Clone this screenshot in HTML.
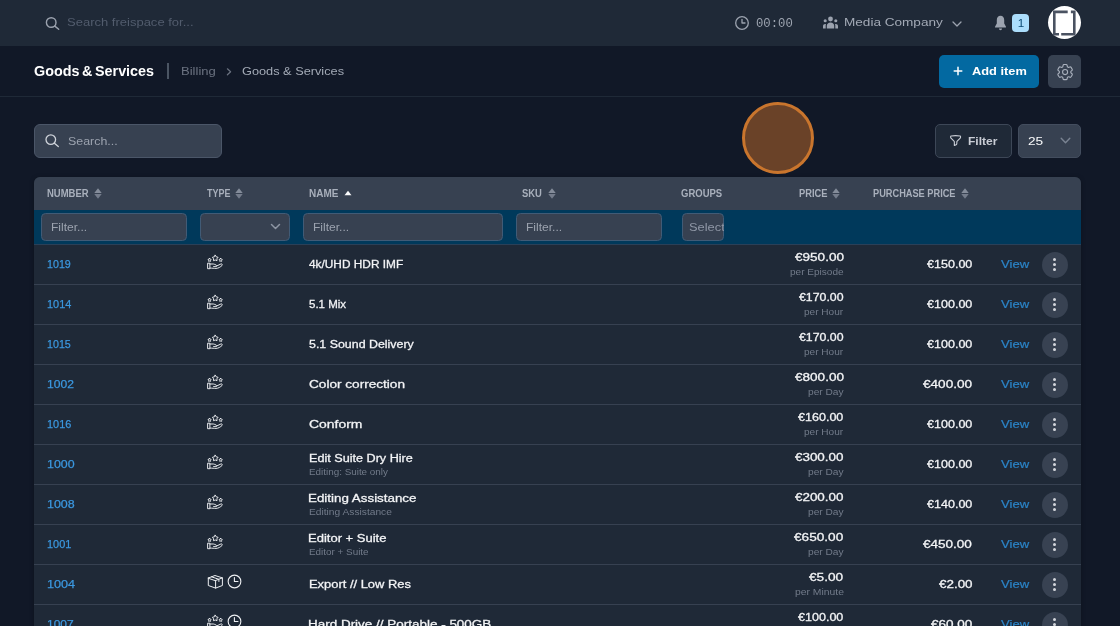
<!DOCTYPE html>
<html lang="en"><head><meta charset="utf-8"><title>Goods &amp; Services</title>
<style>
*{box-sizing:border-box;margin:0;padding:0}
html,body{width:1120px;height:626px;overflow:hidden;background:#111827;font-family:"Liberation Sans",sans-serif;color:#f9fafb}
.a,.t{position:absolute}
.t{white-space:nowrap;line-height:1;transform-origin:0 0}
.rb{left:34.400px;width:1046.600px;height:1px;background:#374151}
.fin{top:213px;height:28px;background:#374151;border:1px solid #415b76;border-radius:4.500px}
.kb{left:1041.800px;width:26.300px;height:26.300px;border-radius:50%;background:#384252}
.kb i{position:absolute;left:11.650px;width:3px;height:3px;border-radius:50%;background:#d3d6dc}
.kb i:nth-child(1){top:6.850px}.kb i:nth-child(2){top:11.650px}.kb i:nth-child(3){top:16.450px}
</style></head><body>
<!-- top bar -->
<div class="a" style="left:0;top:0;width:1120px;height:45.500px;background:#1f2937"></div>
<svg class="a" style="left:44px;top:15px" width="17" height="17" viewBox="0 0 17 17" fill="none" stroke="#9ca3af" stroke-width="1.400" stroke-linecap="round"><circle cx="7.200" cy="7.500" r="4.800"/><path d="M10.800 11.100L14.700 14.300"/></svg>
<svg class="a" style="left:733.750px;top:15px" width="16" height="16" viewBox="0 0 16 16" fill="none" stroke="#9ca3af" stroke-width="1.300" stroke-linecap="round" stroke-linejoin="round"><circle cx="8" cy="8" r="6.300"/><path d="M8 4.300V8h3"/></svg>
<svg class="a" style="left:822px;top:15.100px" width="17" height="16" viewBox="0 0 17 16" fill="#9ca3af"><circle cx="8.500" cy="4" r="2.400"/><path d="M4.800 13.500v-2.700c0-2 1.600-3.300 3.700-3.300s3.700 1.300 3.700 3.300v2.700z"/><circle cx="3.200" cy="5.800" r="1.550"/><circle cx="13.800" cy="5.800" r="1.550"/><path d="M1 13.500v-2.300c0-1.400.9-2.300 2.300-2.300.3 0 .5 0 .7.100-.2.500-.3 1-.3 1.600v2.900z"/><path d="M16 13.500v-2.300c0-1.400-.9-2.300-2.300-2.300-.3 0-.5 0-.7.100.2.500.3 1 .3 1.600v2.900z"/></svg>
<svg class="a" style="left:951.500px;top:20.500px" width="10" height="7" viewBox="0 0 10 7" fill="none" stroke="#9ca3af" stroke-width="1.300" stroke-linecap="round" stroke-linejoin="round"><path d="M1 1L5 5l4-4"/></svg>
<svg class="a" style="left:994px;top:15px" width="13" height="17" viewBox="0 0 13 17" fill="#9ca3af"><path d="M6.500 0.800C4.200 0.800 2.800 2.600 2.800 5v3.500L1 11.800c-.2.400 0 .8.500.8h10c.5 0 .7-.4.500-.8L10.200 8.500V5c0-2.400-1.400-4.200-3.700-4.200z"/><path d="M5 13.600h3c0 .900-.7 1.600-1.500 1.600S5 14.500 5 13.600z"/></svg>
<div class="a" style="left:1011.800px;top:14px;width:17.300px;height:18px;background:#abddfb;border-radius:4px"></div>
<div class="a" style="left:1048px;top:5.800px;width:33.400px;height:33.400px;border-radius:50%;background:#fff"></div>
<svg class="a" style="left:1048px;top:5.800px" width="34" height="34" viewBox="0 0 34 34" fill="none" stroke="#4a5261" stroke-width="2.600"><path d="M19.700 5.900H6.300V28.200H11"/><path d="M22.900 5.900H26.300V28.200H13.200"/></svg>
<!-- header -->
<div class="a" style="left:0;top:96px;width:1120px;height:1px;background:#1f2937"></div>
<div class="a" style="left:167.200px;top:63.400px;width:2px;height:16px;background:#4b5563"></div>
<svg class="a" style="left:225px;top:67px" width="8" height="10" viewBox="0 0 8 10" fill="none" stroke="#6b7280" stroke-width="1.200" stroke-linecap="round" stroke-linejoin="round"><path d="M2.400 1.800l3.200 3-3.200 3"/></svg>
<div class="a" style="left:938.600px;top:55.200px;width:100.300px;height:32.900px;background:#0369a1;border-radius:5px"></div>
<svg class="a" style="left:952.750px;top:66.250px" width="10" height="10" viewBox="0 0 10 10" stroke="#fff" stroke-width="1.500" stroke-linecap="round"><path d="M5 1.200v7.600M1.200 5h7.600"/></svg>
<div class="a" style="left:1048.200px;top:55.200px;width:32.800px;height:32.900px;background:#374151;border-radius:5px"></div>
<svg class="a" style="left:1054.500px;top:61.900px" width="20.200" height="20.200" viewBox="0 0 24 24" fill="none" stroke="#aab1bd" stroke-width="1.300" stroke-linecap="round" stroke-linejoin="round"><path d="M9.594 3.940c.09-.542.560-.940 1.110-.940h2.593c.55 0 1.020.398 1.110.940l.213 1.281c.063.374.313.686.645.870.074.040.147.083.220.127.324.196.720.257 1.075.124l1.217-.456a1.125 1.125 0 011.370.490l1.296 2.247a1.125 1.125 0 01-.260 1.431l-1.003.827c-.293.240-.438.613-.431.992a6.759 6.759 0 010 .255c-.007.378.138.750.430.990l1.005.828c.424.350.534.954.260 1.430l-1.298 2.247a1.125 1.125 0 01-1.369.491l-1.217-.456c-.355-.133-.750-.072-1.076.124a6.570 6.570 0 01-.220.128c-.331.183-.581.495-.644.869l-.213 1.280c-.090.543-.560.941-1.110.941h-2.594c-.550 0-1.020-.398-1.110-.940l-.213-1.281c-.062-.374-.312-.686-.644-.870a6.520 6.520 0 01-.220-.127c-.325-.196-.720-.257-1.076-.124l-1.217.456a1.125 1.125 0 01-1.369-.490l-1.297-2.247a1.125 1.125 0 01.260-1.431l1.004-.827c.292-.240.437-.613.430-.992a6.932 6.932 0 010-.255c.007-.378-.138-.750-.430-.990l-1.004-.828a1.125 1.125 0 01-.260-1.430l1.297-2.247a1.125 1.125 0 011.370-.491l1.216.456c.356.133.751.072 1.076-.124.072-.044.146-.087.220-.128.332-.183.582-.495.644-.869l.214-1.281z"/><circle cx="12" cy="12" r="3"/></svg>
<!-- tools -->
<div class="a" style="left:34.400px;top:123.800px;width:187.700px;height:34.200px;background:#374151;border:1px solid #4b5668;border-radius:6px"></div>
<svg class="a" style="left:44.100px;top:133.100px" width="17" height="17" viewBox="0 0 17 17" fill="none" stroke="#cfd3da" stroke-width="1.300" stroke-linecap="round"><circle cx="6.800" cy="6.600" r="4.800"/><path d="M10.400 10.200L14.300 13.600"/></svg>
<div class="a" style="left:742px;top:102px;width:72px;height:72px;border-radius:50%;background:#6a4228;border:3.200px solid #c9752d"></div>
<div class="a" style="left:935.400px;top:123.800px;width:76.700px;height:34.200px;border:1px solid #3d4757;border-radius:5px;background:#1f2937"></div>
<svg class="a" style="left:949.100px;top:134.300px" width="13.200" height="13.200" viewBox="0 0 24 24" fill="none" stroke="#c9cdd5" stroke-width="2" stroke-linejoin="round" stroke-linecap="round"><path d="M12 3c2.755 0 5.455.232 8.083.678.533.09.917.556.917 1.096v1.044a2.250 2.250 0 01-.659 1.591l-5.432 5.432a2.250 2.250 0 00-.659 1.591v2.927a2.250 2.250 0 01-1.244 2.013L9.750 21v-6.568a2.250 2.250 0 00-.659-1.591L3.659 7.409A2.250 2.250 0 013 5.818V4.774c0-.540.384-1.006.917-1.096A48.320 48.320 0 0112 3z"/></svg>
<div class="a" style="left:1018.400px;top:123.800px;width:62.700px;height:34.200px;border:1px solid #434d5e;border-radius:5px;background:#374151"></div>
<svg class="a" style="left:1060.400px;top:137px" width="11" height="8" viewBox="0 0 11 8" fill="none" stroke="#7a8392" stroke-width="1.400" stroke-linecap="round" stroke-linejoin="round"><path d="M1.200 1.200L5.500 5.800l4.300-4.600"/></svg>
<!-- table -->
<div class="a" style="left:34.400px;top:177px;width:1046.600px;height:460px;border-radius:6px 6px 0 0;background:#1f2937;overflow:hidden;box-shadow:0 1px 5px rgba(0,0,0,.28)">
 <div class="a" style="left:0;top:0;width:1047px;height:33px;background:#374151"></div>
 <div class="a" style="left:0;top:33px;width:1047px;height:35px;background:#00395b"></div>
 <div class="a" style="left:0;top:67px;width:1047px;height:1px;background:#2a4058"></div>
</div>
<svg class="a" style="left:94.0px;top:188.300px" width="8" height="11" viewBox="0 0 8 11"><path d="M4 0.300L7.700 5H0.300z" fill="#848c9a"/><path d="M4 10.700L7.700 6H0.300z" fill="#747c8b"/></svg><svg class="a" style="left:235.4px;top:188.300px" width="8" height="11" viewBox="0 0 8 11"><path d="M4 0.300L7.700 5H0.300z" fill="#848c9a"/><path d="M4 10.700L7.700 6H0.300z" fill="#747c8b"/></svg><svg class="a" style="left:344px;top:188.300px" width="8" height="11" viewBox="0 0 8 11"><path d="M4 2.700L7.500 7.200H0.500z" fill="#f9fafb"/></svg><svg class="a" style="left:547.6px;top:188.300px" width="8" height="11" viewBox="0 0 8 11"><path d="M4 0.300L7.700 5H0.300z" fill="#848c9a"/><path d="M4 10.700L7.700 6H0.300z" fill="#747c8b"/></svg><svg class="a" style="left:832.4px;top:188.300px" width="8" height="11" viewBox="0 0 8 11"><path d="M4 0.300L7.700 5H0.300z" fill="#848c9a"/><path d="M4 10.700L7.700 6H0.300z" fill="#747c8b"/></svg><svg class="a" style="left:960.8px;top:188.300px" width="8" height="11" viewBox="0 0 8 11"><path d="M4 0.300L7.700 5H0.300z" fill="#848c9a"/><path d="M4 10.700L7.700 6H0.300z" fill="#747c8b"/></svg>
<div class="a fin" style="left:41px;width:146px;"></div><div class="a fin" style="left:200px;width:90px;"></div><div class="a fin" style="left:303px;width:200px;"></div><div class="a fin" style="left:516px;width:146px;"></div><div class="a fin" style="left:681.5px;width:42.5px;"></div>
<svg class="a" style="left:269.500px;top:223px" width="11" height="8" viewBox="0 0 11 8" fill="none" stroke="#8d95a3" stroke-width="1.500" stroke-linecap="round" stroke-linejoin="round"><path d="M1.500 1.500l4 4 4-4"/></svg>
<div class="a" style="left:681.500px;top:213px;width:41.500px;height:28px;overflow:hidden;will-change:transform"><span class="t" style="left:6.900px;top:8px;font-size:11.700px;color:#8f97a6;transform:scaleX(1.1)">Select</span></div>
<div class="a rb" style="top:284px"></div><svg class="a" style="left:206.7px;top:254.3px" width="16" height="16" viewBox="0 0 16 16" fill="none" stroke="#eef0f3" stroke-width="0.950" stroke-linejoin="round" stroke-linecap="round"><path d="M8.25 1.25L9.28 2.83L11.10 3.32L9.91 4.79L10.01 6.68L8.25 6.00L6.49 6.68L6.59 4.79L5.40 3.32L7.22 2.83z"/><path d="M2.60 4.35L3.22 5.15L4.17 5.49L3.60 6.32L3.57 7.33L2.60 7.05L1.63 7.33L1.60 6.32L1.03 5.49L1.98 5.15z"/><path d="M13.70 4.35L14.32 5.15L15.27 5.49L14.70 6.32L14.67 7.33L13.70 7.05L12.73 7.33L12.70 6.32L12.13 5.49L13.08 5.15z"/><path d="M1 9.200h1.900v5.500h-1.900z"/><path d="M2.900 10h3.300c.500 0 1 .100 1.500.400l1.600.800c.800.400.500 1.400-.400 1.400h-2.300"/><path d="M9.800 11.900l4.100-1.900c1-.500 1.900.700 1.100 1.500-1.400 1.400-3.700 2.900-6 2.900-1.900 0-3.800-.300-6.100-.300"/></svg><div class="a kb" style="top:251.5px"><i></i><i></i><i></i></div>
<div class="a rb" style="top:324px"></div><svg class="a" style="left:206.7px;top:294.3px" width="16" height="16" viewBox="0 0 16 16" fill="none" stroke="#eef0f3" stroke-width="0.950" stroke-linejoin="round" stroke-linecap="round"><path d="M8.25 1.25L9.28 2.83L11.10 3.32L9.91 4.79L10.01 6.68L8.25 6.00L6.49 6.68L6.59 4.79L5.40 3.32L7.22 2.83z"/><path d="M2.60 4.35L3.22 5.15L4.17 5.49L3.60 6.32L3.57 7.33L2.60 7.05L1.63 7.33L1.60 6.32L1.03 5.49L1.98 5.15z"/><path d="M13.70 4.35L14.32 5.15L15.27 5.49L14.70 6.32L14.67 7.33L13.70 7.05L12.73 7.33L12.70 6.32L12.13 5.49L13.08 5.15z"/><path d="M1 9.200h1.900v5.500h-1.900z"/><path d="M2.900 10h3.300c.500 0 1 .100 1.500.400l1.600.800c.800.400.500 1.400-.400 1.400h-2.300"/><path d="M9.800 11.900l4.100-1.900c1-.500 1.900.700 1.100 1.500-1.400 1.400-3.700 2.900-6 2.900-1.900 0-3.800-.300-6.100-.300"/></svg><div class="a kb" style="top:291.5px"><i></i><i></i><i></i></div>
<div class="a rb" style="top:364px"></div><svg class="a" style="left:206.7px;top:334.3px" width="16" height="16" viewBox="0 0 16 16" fill="none" stroke="#eef0f3" stroke-width="0.950" stroke-linejoin="round" stroke-linecap="round"><path d="M8.25 1.25L9.28 2.83L11.10 3.32L9.91 4.79L10.01 6.68L8.25 6.00L6.49 6.68L6.59 4.79L5.40 3.32L7.22 2.83z"/><path d="M2.60 4.35L3.22 5.15L4.17 5.49L3.60 6.32L3.57 7.33L2.60 7.05L1.63 7.33L1.60 6.32L1.03 5.49L1.98 5.15z"/><path d="M13.70 4.35L14.32 5.15L15.27 5.49L14.70 6.32L14.67 7.33L13.70 7.05L12.73 7.33L12.70 6.32L12.13 5.49L13.08 5.15z"/><path d="M1 9.200h1.900v5.500h-1.900z"/><path d="M2.900 10h3.300c.500 0 1 .100 1.500.400l1.600.800c.800.400.500 1.400-.400 1.400h-2.300"/><path d="M9.800 11.900l4.100-1.900c1-.500 1.900.700 1.100 1.500-1.400 1.400-3.700 2.900-6 2.900-1.900 0-3.800-.300-6.100-.300"/></svg><div class="a kb" style="top:331.5px"><i></i><i></i><i></i></div>
<div class="a rb" style="top:404px"></div><svg class="a" style="left:206.7px;top:374.3px" width="16" height="16" viewBox="0 0 16 16" fill="none" stroke="#eef0f3" stroke-width="0.950" stroke-linejoin="round" stroke-linecap="round"><path d="M8.25 1.25L9.28 2.83L11.10 3.32L9.91 4.79L10.01 6.68L8.25 6.00L6.49 6.68L6.59 4.79L5.40 3.32L7.22 2.83z"/><path d="M2.60 4.35L3.22 5.15L4.17 5.49L3.60 6.32L3.57 7.33L2.60 7.05L1.63 7.33L1.60 6.32L1.03 5.49L1.98 5.15z"/><path d="M13.70 4.35L14.32 5.15L15.27 5.49L14.70 6.32L14.67 7.33L13.70 7.05L12.73 7.33L12.70 6.32L12.13 5.49L13.08 5.15z"/><path d="M1 9.200h1.900v5.500h-1.900z"/><path d="M2.900 10h3.300c.500 0 1 .100 1.500.400l1.600.800c.800.400.500 1.400-.400 1.400h-2.300"/><path d="M9.800 11.900l4.100-1.900c1-.500 1.900.700 1.100 1.500-1.400 1.400-3.700 2.900-6 2.900-1.900 0-3.800-.300-6.100-.300"/></svg><div class="a kb" style="top:371.5px"><i></i><i></i><i></i></div>
<div class="a rb" style="top:444px"></div><svg class="a" style="left:206.7px;top:414.3px" width="16" height="16" viewBox="0 0 16 16" fill="none" stroke="#eef0f3" stroke-width="0.950" stroke-linejoin="round" stroke-linecap="round"><path d="M8.25 1.25L9.28 2.83L11.10 3.32L9.91 4.79L10.01 6.68L8.25 6.00L6.49 6.68L6.59 4.79L5.40 3.32L7.22 2.83z"/><path d="M2.60 4.35L3.22 5.15L4.17 5.49L3.60 6.32L3.57 7.33L2.60 7.05L1.63 7.33L1.60 6.32L1.03 5.49L1.98 5.15z"/><path d="M13.70 4.35L14.32 5.15L15.27 5.49L14.70 6.32L14.67 7.33L13.70 7.05L12.73 7.33L12.70 6.32L12.13 5.49L13.08 5.15z"/><path d="M1 9.200h1.900v5.500h-1.900z"/><path d="M2.900 10h3.300c.500 0 1 .100 1.500.400l1.600.800c.800.400.500 1.400-.400 1.400h-2.300"/><path d="M9.800 11.900l4.100-1.900c1-.500 1.900.700 1.100 1.500-1.400 1.400-3.700 2.900-6 2.900-1.900 0-3.800-.300-6.100-.300"/></svg><div class="a kb" style="top:411.5px"><i></i><i></i><i></i></div>
<div class="a rb" style="top:484px"></div><svg class="a" style="left:206.7px;top:454.3px" width="16" height="16" viewBox="0 0 16 16" fill="none" stroke="#eef0f3" stroke-width="0.950" stroke-linejoin="round" stroke-linecap="round"><path d="M8.25 1.25L9.28 2.83L11.10 3.32L9.91 4.79L10.01 6.68L8.25 6.00L6.49 6.68L6.59 4.79L5.40 3.32L7.22 2.83z"/><path d="M2.60 4.35L3.22 5.15L4.17 5.49L3.60 6.32L3.57 7.33L2.60 7.05L1.63 7.33L1.60 6.32L1.03 5.49L1.98 5.15z"/><path d="M13.70 4.35L14.32 5.15L15.27 5.49L14.70 6.32L14.67 7.33L13.70 7.05L12.73 7.33L12.70 6.32L12.13 5.49L13.08 5.15z"/><path d="M1 9.200h1.900v5.500h-1.900z"/><path d="M2.900 10h3.300c.500 0 1 .100 1.500.400l1.600.800c.800.400.500 1.400-.400 1.400h-2.300"/><path d="M9.800 11.900l4.100-1.900c1-.500 1.900.700 1.100 1.500-1.400 1.400-3.700 2.900-6 2.900-1.900 0-3.800-.300-6.100-.300"/></svg><div class="a kb" style="top:451.5px"><i></i><i></i><i></i></div>
<div class="a rb" style="top:524px"></div><svg class="a" style="left:206.7px;top:494.3px" width="16" height="16" viewBox="0 0 16 16" fill="none" stroke="#eef0f3" stroke-width="0.950" stroke-linejoin="round" stroke-linecap="round"><path d="M8.25 1.25L9.28 2.83L11.10 3.32L9.91 4.79L10.01 6.68L8.25 6.00L6.49 6.68L6.59 4.79L5.40 3.32L7.22 2.83z"/><path d="M2.60 4.35L3.22 5.15L4.17 5.49L3.60 6.32L3.57 7.33L2.60 7.05L1.63 7.33L1.60 6.32L1.03 5.49L1.98 5.15z"/><path d="M13.70 4.35L14.32 5.15L15.27 5.49L14.70 6.32L14.67 7.33L13.70 7.05L12.73 7.33L12.70 6.32L12.13 5.49L13.08 5.15z"/><path d="M1 9.200h1.900v5.500h-1.900z"/><path d="M2.900 10h3.300c.500 0 1 .100 1.500.400l1.600.800c.800.400.500 1.400-.400 1.400h-2.300"/><path d="M9.800 11.900l4.100-1.900c1-.500 1.900.700 1.100 1.500-1.400 1.400-3.700 2.900-6 2.900-1.900 0-3.800-.300-6.100-.300"/></svg><div class="a kb" style="top:491.5px"><i></i><i></i><i></i></div>
<div class="a rb" style="top:564px"></div><svg class="a" style="left:206.7px;top:534.3px" width="16" height="16" viewBox="0 0 16 16" fill="none" stroke="#eef0f3" stroke-width="0.950" stroke-linejoin="round" stroke-linecap="round"><path d="M8.25 1.25L9.28 2.83L11.10 3.32L9.91 4.79L10.01 6.68L8.25 6.00L6.49 6.68L6.59 4.79L5.40 3.32L7.22 2.83z"/><path d="M2.60 4.35L3.22 5.15L4.17 5.49L3.60 6.32L3.57 7.33L2.60 7.05L1.63 7.33L1.60 6.32L1.03 5.49L1.98 5.15z"/><path d="M13.70 4.35L14.32 5.15L15.27 5.49L14.70 6.32L14.67 7.33L13.70 7.05L12.73 7.33L12.70 6.32L12.13 5.49L13.08 5.15z"/><path d="M1 9.200h1.900v5.500h-1.900z"/><path d="M2.900 10h3.300c.500 0 1 .100 1.500.400l1.600.800c.800.400.500 1.400-.400 1.400h-2.300"/><path d="M9.800 11.900l4.100-1.900c1-.500 1.900.700 1.100 1.500-1.400 1.400-3.700 2.900-6 2.900-1.900 0-3.800-.300-6.100-.300"/></svg><div class="a kb" style="top:531.5px"><i></i><i></i><i></i></div>
<div class="a rb" style="top:604px"></div><svg class="a" style="left:207px;top:574px" width="17" height="16" viewBox="0 0 17 16" fill="none" stroke="#eef0f3" stroke-width="1" stroke-linejoin="round" stroke-linecap="round"><path d="M1.300 4L8 1.500l7.400 2.400L8.600 6.500z"/><path d="M1.300 4v7.500l7.300 2.600 6.800-2.600V3.900"/><path d="M8.600 6.500v7.600"/><path d="M4.500 2.800l7.400 2.500v2.200"/></svg><svg class="a" style="left:227px;top:574.1px" width="15" height="15" viewBox="0 0 15 15" fill="none" stroke="#eef0f3" stroke-width="1.100" stroke-linejoin="round" stroke-linecap="round"><circle cx="7.500" cy="7.500" r="6.350"/><path d="M7.400 3.600v3.900h3.600"/></svg><div class="a kb" style="top:571.5px"><i></i><i></i><i></i></div>
<div class="a rb" style="top:644px"></div><svg class="a" style="left:206.7px;top:614.3px" width="16" height="16" viewBox="0 0 16 16" fill="none" stroke="#eef0f3" stroke-width="0.950" stroke-linejoin="round" stroke-linecap="round"><path d="M8.25 1.25L9.28 2.83L11.10 3.32L9.91 4.79L10.01 6.68L8.25 6.00L6.49 6.68L6.59 4.79L5.40 3.32L7.22 2.83z"/><path d="M2.60 4.35L3.22 5.15L4.17 5.49L3.60 6.32L3.57 7.33L2.60 7.05L1.63 7.33L1.60 6.32L1.03 5.49L1.98 5.15z"/><path d="M13.70 4.35L14.32 5.15L15.27 5.49L14.70 6.32L14.67 7.33L13.70 7.05L12.73 7.33L12.70 6.32L12.13 5.49L13.08 5.15z"/><path d="M1 9.200h1.900v5.500h-1.900z"/><path d="M2.900 10h3.300c.500 0 1 .100 1.500.400l1.600.800c.800.400.500 1.400-.400 1.400h-2.300"/><path d="M9.800 11.900l4.100-1.900c1-.500 1.900.700 1.100 1.500-1.400 1.400-3.700 2.900-6 2.900-1.900 0-3.800-.300-6.100-.300"/></svg><svg class="a" style="left:227px;top:614.1px" width="15" height="15" viewBox="0 0 15 15" fill="none" stroke="#eef0f3" stroke-width="1.100" stroke-linejoin="round" stroke-linecap="round"><circle cx="7.500" cy="7.500" r="6.350"/><path d="M7.400 3.600v3.900h3.600"/></svg><div class="a kb" style="top:611.5px"><i></i><i></i><i></i></div>
<div class="a" style="left:0;top:0;width:1120px;height:626px;will-change:transform">
<span class="t" style="left:66.64px;top:16px;font-size:11.7px;color:#525c6d;transform:scaleX(1.1130);">Search freispace for...</span>
<span class="t" style="left:756.49px;top:17px;font-size:13px;color:#9ca3af;font-family:'Liberation Mono',monospace;transform:scaleX(0.9440);">00:00</span>
<span class="t" style="left:844.34px;top:16px;font-size:11.7px;color:#a3aab6;transform:scaleX(1.1607);">Media Company</span>
<span class="t" style="left:1017.83px;top:17px;font-size:11.7px;color:#0b4a73;">1</span>
<span class="t" style="left:34.21px;top:63px;font-size:15.2px;color:#ffffff;font-weight:700;word-spacing:-1.5px;transform:scaleX(0.9455);">Goods &amp; Services</span>
<span class="t" style="left:181.18px;top:65px;font-size:11.7px;color:#6b7280;transform:scaleX(1.1153);">Billing</span>
<span class="t" style="left:241.52px;top:65px;font-size:11.7px;color:#a3aab6;transform:scaleX(1.0908);">Goods &amp; Services</span>
<span class="t" style="left:971.53px;top:65px;font-size:11.7px;color:#ffffff;font-weight:700;transform:scaleX(1.0959);">Add item</span>
<span class="t" style="left:67.67px;top:135px;font-size:11.7px;color:#9ca3af;transform:scaleX(1.0608);">Search...</span>
<span class="t" style="left:968.43px;top:135px;font-size:11.7px;color:#c9cdd5;font-weight:700;transform:scaleX(1.0317);">Filter</span>
<span class="t" style="left:1028.07px;top:135px;font-size:11.7px;color:#f9fafb;transform:scaleX(1.1705);">25</span>
<span class="t" style="left:47.04px;top:188px;font-size:10.5px;color:#a9b0bc;font-weight:700;transform:scaleX(0.9039);">NUMBER</span>
<span class="t" style="left:206.99px;top:188px;font-size:10.5px;color:#a9b0bc;font-weight:700;transform:scaleX(0.8521);">TYPE</span>
<span class="t" style="left:309.01px;top:188px;font-size:10.5px;color:#a9b0bc;font-weight:700;transform:scaleX(0.9506);">NAME</span>
<span class="t" style="left:522.38px;top:188px;font-size:10.5px;color:#a9b0bc;font-weight:700;transform:scaleX(0.8988);">SKU</span>
<span class="t" style="left:681.16px;top:188px;font-size:10.5px;color:#a9b0bc;font-weight:700;transform:scaleX(0.9050);">GROUPS</span>
<span class="t" style="left:798.64px;top:188px;font-size:10.5px;color:#a9b0bc;font-weight:700;transform:scaleX(0.8900);">PRICE</span>
<span class="t" style="left:872.95px;top:188px;font-size:10.5px;color:#a9b0bc;font-weight:700;transform:scaleX(0.8786);">PURCHASE PRICE</span>
<span class="t" style="left:51.17px;top:221px;font-size:11.7px;color:#9ca3af;transform:scaleX(1.0303);">Filter...</span>
<span class="t" style="left:312.67px;top:221px;font-size:11.7px;color:#9ca3af;transform:scaleX(1.0303);">Filter...</span>
<span class="t" style="left:525.67px;top:221px;font-size:11.7px;color:#9ca3af;transform:scaleX(1.0303);">Filter...</span>
<span class="t" style="left:46.90px;top:258px;font-size:11.7px;color:#3b98e0;-webkit-text-stroke:0.25px #3b98e0;transform:scaleX(0.9137);">1019</span>
<span class="t" style="left:309.35px;top:258px;font-size:11.7px;color:#f3f4f6;-webkit-text-stroke:0.3px #f3f4f6;transform:scaleX(1.0138);">4k/UHD HDR IMF</span>
<span class="t" style="left:794.66px;top:251px;font-size:11.7px;color:#f3f4f6;-webkit-text-stroke:0.3px #f3f4f6;transform:scaleX(1.1593);">€950.00</span>
<span class="t" style="left:790.04px;top:267px;font-size:9.5px;color:#727b8a;transform:scaleX(1.0579);">per Episode</span>
<span class="t" style="left:926.87px;top:258px;font-size:11.7px;color:#f3f4f6;-webkit-text-stroke:0.3px #f3f4f6;transform:scaleX(1.0731);">€150.00</span>
<span class="t" style="left:1000.76px;top:258px;font-size:11.7px;color:#2b84c8;-webkit-text-stroke:0.2px #2b84c8;transform:scaleX(1.1200);">View</span>
<span class="t" style="left:46.88px;top:298px;font-size:11.7px;color:#3b98e0;-webkit-text-stroke:0.25px #3b98e0;transform:scaleX(0.9333);">1014</span>
<span class="t" style="left:309.11px;top:298px;font-size:11.7px;color:#f3f4f6;-webkit-text-stroke:0.3px #f3f4f6;transform:scaleX(0.9838);">5.1 Mix</span>
<span class="t" style="left:799.07px;top:291px;font-size:11.7px;color:#f3f4f6;-webkit-text-stroke:0.3px #f3f4f6;transform:scaleX(1.0539);">€170.00</span>
<span class="t" style="left:804.14px;top:307px;font-size:9.5px;color:#727b8a;transform:scaleX(1.0593);">per Hour</span>
<span class="t" style="left:926.87px;top:298px;font-size:11.7px;color:#f3f4f6;-webkit-text-stroke:0.3px #f3f4f6;transform:scaleX(1.0731);">€100.00</span>
<span class="t" style="left:1000.76px;top:298px;font-size:11.7px;color:#2b84c8;-webkit-text-stroke:0.2px #2b84c8;transform:scaleX(1.1200);">View</span>
<span class="t" style="left:46.90px;top:338px;font-size:11.7px;color:#3b98e0;-webkit-text-stroke:0.25px #3b98e0;transform:scaleX(0.9137);">1015</span>
<span class="t" style="left:309.07px;top:338px;font-size:11.7px;color:#f3f4f6;-webkit-text-stroke:0.3px #f3f4f6;transform:scaleX(1.0606);">5.1 Sound Delivery</span>
<span class="t" style="left:799.07px;top:331px;font-size:11.7px;color:#f3f4f6;-webkit-text-stroke:0.3px #f3f4f6;transform:scaleX(1.0539);">€170.00</span>
<span class="t" style="left:804.14px;top:347px;font-size:9.5px;color:#727b8a;transform:scaleX(1.0593);">per Hour</span>
<span class="t" style="left:926.87px;top:338px;font-size:11.7px;color:#f3f4f6;-webkit-text-stroke:0.3px #f3f4f6;transform:scaleX(1.0731);">€100.00</span>
<span class="t" style="left:1000.76px;top:338px;font-size:11.7px;color:#2b84c8;-webkit-text-stroke:0.2px #2b84c8;transform:scaleX(1.1200);">View</span>
<span class="t" style="left:46.79px;top:378px;font-size:11.7px;color:#3b98e0;-webkit-text-stroke:0.25px #3b98e0;transform:scaleX(1.0355);">1002</span>
<span class="t" style="left:308.87px;top:378px;font-size:11.7px;color:#f3f4f6;-webkit-text-stroke:0.3px #f3f4f6;transform:scaleX(1.1636);">Color correction</span>
<span class="t" style="left:794.66px;top:371px;font-size:11.7px;color:#f3f4f6;-webkit-text-stroke:0.3px #f3f4f6;transform:scaleX(1.1593);">€800.00</span>
<span class="t" style="left:807.63px;top:387px;font-size:9.5px;color:#727b8a;transform:scaleX(1.0697);">per Day</span>
<span class="t" style="left:923.15px;top:378px;font-size:11.7px;color:#f3f4f6;-webkit-text-stroke:0.3px #f3f4f6;transform:scaleX(1.1617);">€400.00</span>
<span class="t" style="left:1000.76px;top:378px;font-size:11.7px;color:#2b84c8;-webkit-text-stroke:0.2px #2b84c8;transform:scaleX(1.1200);">View</span>
<span class="t" style="left:46.88px;top:418px;font-size:11.7px;color:#3b98e0;-webkit-text-stroke:0.25px #3b98e0;transform:scaleX(0.9340);">1016</span>
<span class="t" style="left:308.86px;top:418px;font-size:11.7px;color:#f3f4f6;-webkit-text-stroke:0.3px #f3f4f6;transform:scaleX(1.1908);">Conform</span>
<span class="t" style="left:798.27px;top:411px;font-size:11.7px;color:#f3f4f6;-webkit-text-stroke:0.3px #f3f4f6;transform:scaleX(1.0731);">€160.00</span>
<span class="t" style="left:804.14px;top:427px;font-size:9.5px;color:#727b8a;transform:scaleX(1.0593);">per Hour</span>
<span class="t" style="left:926.87px;top:418px;font-size:11.7px;color:#f3f4f6;-webkit-text-stroke:0.3px #f3f4f6;transform:scaleX(1.0731);">€100.00</span>
<span class="t" style="left:1000.76px;top:418px;font-size:11.7px;color:#2b84c8;-webkit-text-stroke:0.2px #2b84c8;transform:scaleX(1.1200);">View</span>
<span class="t" style="left:46.77px;top:458px;font-size:11.7px;color:#3b98e0;-webkit-text-stroke:0.25px #3b98e0;transform:scaleX(1.0586);">1000</span>
<span class="t" style="left:308.52px;top:452px;font-size:11.7px;color:#f3f4f6;-webkit-text-stroke:0.3px #f3f4f6;transform:scaleX(1.0801);">Edit Suite Dry Hire</span>
<span class="t" style="left:308.82px;top:467px;font-size:9.5px;color:#727b8a;transform:scaleX(1.0379);">Editing: Suite only</span>
<span class="t" style="left:795.16px;top:451px;font-size:11.7px;color:#f3f4f6;-webkit-text-stroke:0.3px #f3f4f6;transform:scaleX(1.1473);">€300.00</span>
<span class="t" style="left:807.63px;top:467px;font-size:9.5px;color:#727b8a;transform:scaleX(1.0697);">per Day</span>
<span class="t" style="left:926.87px;top:458px;font-size:11.7px;color:#f3f4f6;-webkit-text-stroke:0.3px #f3f4f6;transform:scaleX(1.0731);">€100.00</span>
<span class="t" style="left:1000.76px;top:458px;font-size:11.7px;color:#2b84c8;-webkit-text-stroke:0.2px #2b84c8;transform:scaleX(1.1200);">View</span>
<span class="t" style="left:46.77px;top:498px;font-size:11.7px;color:#3b98e0;-webkit-text-stroke:0.25px #3b98e0;transform:scaleX(1.0640);">1008</span>
<span class="t" style="left:308.46px;top:492px;font-size:11.7px;color:#f3f4f6;-webkit-text-stroke:0.3px #f3f4f6;transform:scaleX(1.1438);">Editing Assistance</span>
<span class="t" style="left:308.79px;top:507px;font-size:9.5px;color:#727b8a;transform:scaleX(1.0750);">Editing Assistance</span>
<span class="t" style="left:795.16px;top:491px;font-size:11.7px;color:#f3f4f6;-webkit-text-stroke:0.3px #f3f4f6;transform:scaleX(1.1473);">€200.00</span>
<span class="t" style="left:807.63px;top:507px;font-size:9.5px;color:#727b8a;transform:scaleX(1.0697);">per Day</span>
<span class="t" style="left:926.87px;top:498px;font-size:11.7px;color:#f3f4f6;-webkit-text-stroke:0.3px #f3f4f6;transform:scaleX(1.0731);">€140.00</span>
<span class="t" style="left:1000.76px;top:498px;font-size:11.7px;color:#2b84c8;-webkit-text-stroke:0.2px #2b84c8;transform:scaleX(1.1200);">View</span>
<span class="t" style="left:46.88px;top:538px;font-size:11.7px;color:#3b98e0;-webkit-text-stroke:0.25px #3b98e0;transform:scaleX(0.9340);">1001</span>
<span class="t" style="left:308.49px;top:532px;font-size:11.7px;color:#f3f4f6;-webkit-text-stroke:0.3px #f3f4f6;transform:scaleX(1.1130);">Editor + Suite</span>
<span class="t" style="left:308.82px;top:547px;font-size:9.5px;color:#727b8a;transform:scaleX(1.0405);">Editor + Suite</span>
<span class="t" style="left:794.35px;top:531px;font-size:11.7px;color:#f3f4f6;-webkit-text-stroke:0.3px #f3f4f6;transform:scaleX(1.1665);">€650.00</span>
<span class="t" style="left:807.63px;top:547px;font-size:9.5px;color:#727b8a;transform:scaleX(1.0697);">per Day</span>
<span class="t" style="left:923.36px;top:538px;font-size:11.7px;color:#f3f4f6;-webkit-text-stroke:0.3px #f3f4f6;transform:scaleX(1.1569);">€450.00</span>
<span class="t" style="left:1000.76px;top:538px;font-size:11.7px;color:#2b84c8;-webkit-text-stroke:0.2px #2b84c8;transform:scaleX(1.1200);">View</span>
<span class="t" style="left:46.75px;top:578px;font-size:11.7px;color:#3b98e0;-webkit-text-stroke:0.25px #3b98e0;transform:scaleX(1.0828);">1004</span>
<span class="t" style="left:308.50px;top:578px;font-size:11.7px;color:#f3f4f6;-webkit-text-stroke:0.3px #f3f4f6;transform:scaleX(1.1048);">Export // Low Res</span>
<span class="t" style="left:809.45px;top:571px;font-size:11.7px;color:#f3f4f6;-webkit-text-stroke:0.3px #f3f4f6;transform:scaleX(1.1687);">€5.00</span>
<span class="t" style="left:794.62px;top:587px;font-size:9.5px;color:#727b8a;transform:scaleX(1.0917);">per Minute</span>
<span class="t" style="left:938.66px;top:578px;font-size:11.7px;color:#f3f4f6;-webkit-text-stroke:0.3px #f3f4f6;transform:scaleX(1.1478);">€2.00</span>
<span class="t" style="left:1000.76px;top:578px;font-size:11.7px;color:#2b84c8;-webkit-text-stroke:0.2px #2b84c8;transform:scaleX(1.1200);">View</span>
<span class="t" style="left:46.80px;top:618px;font-size:11.7px;color:#3b98e0;-webkit-text-stroke:0.25px #3b98e0;transform:scaleX(1.0274);">1007</span>
<span class="t" style="left:308.45px;top:618px;font-size:11.7px;color:#f3f4f6;-webkit-text-stroke:0.3px #f3f4f6;transform:scaleX(1.1517);">Hard Drive // Portable - 500GB</span>
<span class="t" style="left:798.27px;top:611px;font-size:11.7px;color:#f3f4f6;-webkit-text-stroke:0.3px #f3f4f6;transform:scaleX(1.0731);">€100.00</span>
<span class="t" style="left:805.29px;top:627px;font-size:9.5px;color:#727b8a;transform:scaleX(1.1402);">per Unit</span>
<span class="t" style="left:930.86px;top:618px;font-size:11.7px;color:#f3f4f6;-webkit-text-stroke:0.3px #f3f4f6;transform:scaleX(1.1574);">€60.00</span>
<span class="t" style="left:1000.76px;top:618px;font-size:11.7px;color:#2b84c8;-webkit-text-stroke:0.2px #2b84c8;transform:scaleX(1.1200);">View</span>
</div>
</body></html>
